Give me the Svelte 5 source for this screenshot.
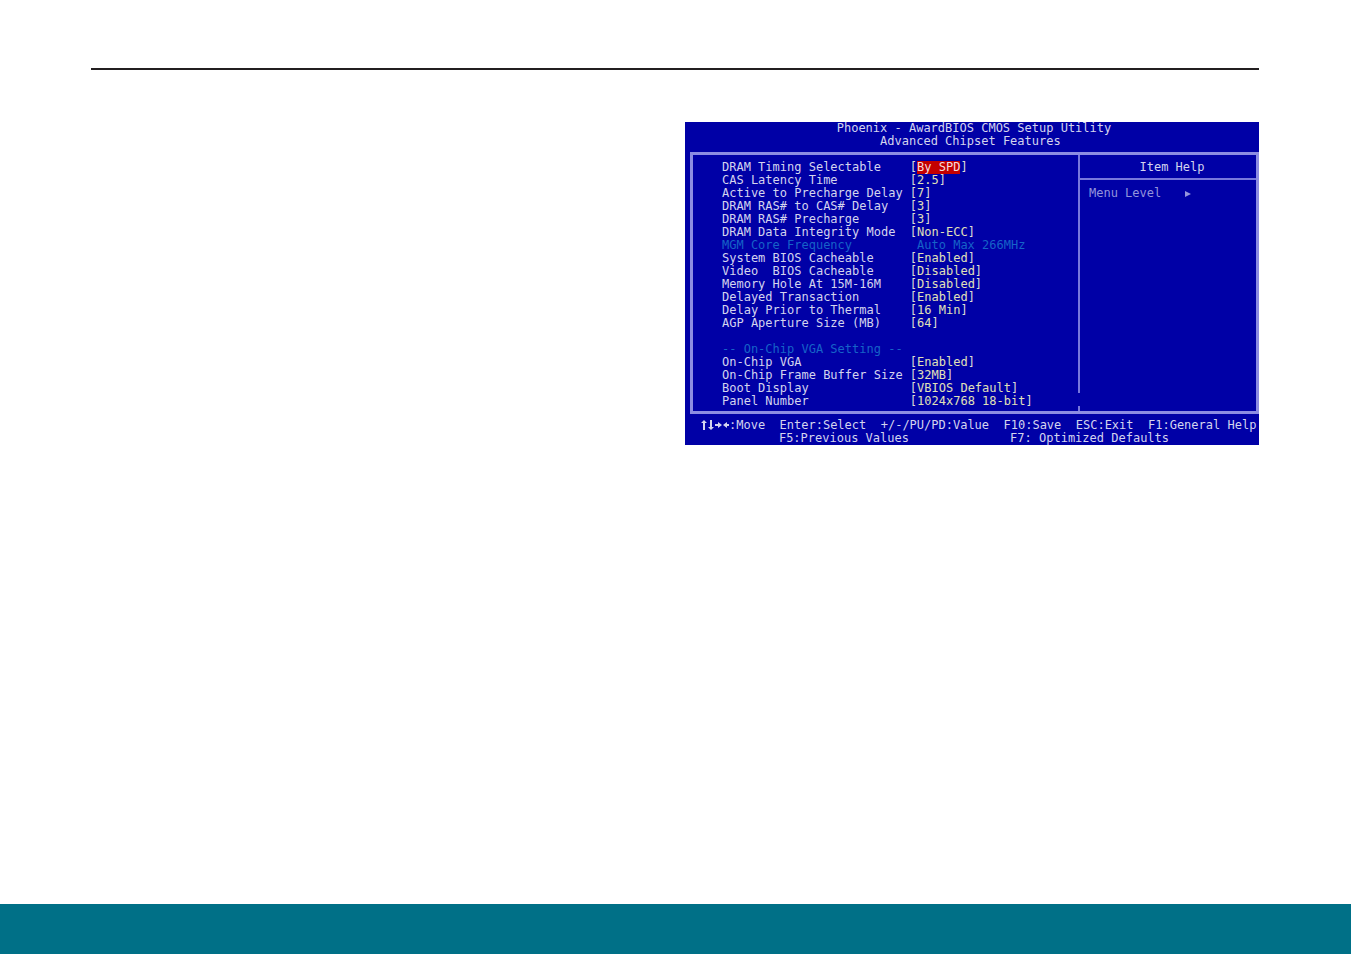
<script lang="ts">
	interface Setting {
		label: string;
		value?: string;
		selected?: boolean;
		heading?: boolean;
		fixed?: boolean;
	}

	const settings: Setting[] = [
		{ label: 'DRAM Timing Selectable', value: 'By SPD', selected: true },
		{ label: 'CAS Latency Time', value: '2.5' },
		{ label: 'Active to Precharge Delay', value: '7' },
		{ label: 'DRAM RAS# to CAS# Delay', value: '3' },
		{ label: 'DRAM RAS# Precharge', value: '3' },
		{ label: 'DRAM Data Integrity Mode', value: 'Non-ECC' },
		{ label: 'MGM Core Frequency', value: 'Auto Max 266MHz', fixed: true },
		{ label: 'System BIOS Cacheable', value: 'Enabled' },
		{ label: 'Video  BIOS Cacheable', value: 'Disabled' },
		{ label: 'Memory Hole At 15M-16M', value: 'Disabled' },
		{ label: 'Delayed Transaction', value: 'Enabled' },
		{ label: 'Delay Prior to Thermal', value: '16 Min' },
		{ label: 'AGP Aperture Size (MB)', value: '64' },
		{ label: '', heading: true },
		{ label: '-- On-Chip VGA Setting --', heading: true },
		{ label: 'On-Chip VGA', value: 'Enabled' },
		{ label: 'On-Chip Frame Buffer Size', value: '32MB' },
		{ label: 'Boot Display', value: 'VBIOS Default' },
		{ label: 'Panel Number', value: '1024x768 18-bit' }
	];
</script>

<div class="page">
	<hr />
	<main>
		<section class="bios">
			<header>
				<h1>Phoenix - AwardBIOS CMOS Setup Utility</h1>
				<h2>Advanced Chipset Features</h2>
			</header>
			<div class="frame">
				<table>
					<tbody>
						{#each settings as item}
							<tr class={{ dim: item.fixed || item.heading }}>
								{#if item.heading}
									<th colspan="2">{item.label}</th>
								{:else}
									<th scope="row">{item.label}</th>
									<td>
										{#if item.fixed}
											<span class="fixed">{item.value}</span>
										{:else}
											[<button type="button" class={{ selected: item.selected }}>{item.value}</button>]
										{/if}
									</td>
								{/if}
							</tr>
						{/each}
					</tbody>
				</table>
				<aside>
					<h3>Item Help</h3>
					<p>
						Menu Level
						<svg viewBox="0 0 7 6" width="7" height="6" aria-hidden="true"><path d="M0 0 6 3 0 6z" /></svg>
					</p>
				</aside>
			</div>
			<footer>
				<div class="keys">
					<span>
						<svg viewBox="0 0 28 10" width="28" height="10" aria-hidden="true">
							<path d="M3 0 6 3H4v7H2V3H0zM9 0h2v7h2l-3 3-3-3h2zM14 4h3V2l4 3-4 3V6h-3zM28 4h-2V2l-4 3 4 3V6h2z" />
						</svg>:Move
					</span>
					<span>Enter:Select</span>
					<span>+/-/PU/PD:Value</span>
					<span>F10:Save</span>
					<span>ESC:Exit</span>
					<span>F1:General Help</span>
				</div>
				<div class="keys second">
					<span>F5:Previous Values</span>
					<span>F7: Optimized Defaults</span>
				</div>
			</footer>
		</section>
	</main>
	<div class="band"></div>
</div>

<style>
	:global(body) {
		margin: 0;
		background: #fff;
	}

	.page {
		display: flex;
		flex-direction: column;
		min-height: 100vh;
	}

	hr {
		width: auto;
		height: 2px;
		margin: 68px 92px 0 91px;
		border: 0;
		background: #231f20;
	}

	main {
		flex: 1;
		display: grid;
		grid-template-columns: 1fr 1fr;
		align-items: start;
		gap: 20px;
		margin: 52px 92px 40px 91px;
	}

	.band {
		height: 50px;
		background: #007087;
	}

	.bios {
		grid-column: 2;
		background: #0000a6;
		color: #d4d4ee;
		font: 12px/13px 'DejaVu Sans Mono', 'Liberation Mono', monospace;
	}

	h1,
	h2,
	h3,
	p {
		margin: 0;
		font: inherit;
	}

	header {
		padding-bottom: 4px;
		white-space: nowrap;
	}

	h1 {
		padding-left: 21ch;
	}

	h2 {
		padding-left: 27ch;
	}

	.frame {
		display: flex;
		margin-left: 5px;
		border: 3px solid #8c8ce2;
	}

	table {
		flex: 1;
		margin: 6px 0 3px 29px;
		border-collapse: collapse;
		table-layout: fixed;
	}

	th,
	td {
		padding: 0;
		height: 13px;
		font-weight: inherit;
		text-align: left;
		white-space: pre;
	}

	th {
		width: 26ch;
	}

	td {
		white-space: nowrap;
		color: #dcdcd4;
	}

	button {
		padding: 0;
		border: 0;
		background: none;
		color: #e0e0b8;
		font: inherit;
		cursor: pointer;
	}

	.selected {
		background: #c40000;
		color: #f4dcdc;
	}

	.dim,
	.dim td {
		color: #1663c8;
	}

	.fixed {
		margin-left: 1ch;
	}

	/* the divider breaks off one row above the bottom edge */
	aside {
		width: 178px;
		background:
			linear-gradient(#7878dc, #7878dc) left top / 2px calc(100% - 18px) no-repeat,
			linear-gradient(#7878dc, #7878dc) left bottom / 2px 5px no-repeat;
	}

	h3 {
		padding: 6px 0 4px 10px;
		border-bottom: 2px solid #7878dc;
		text-align: center;
	}

	p {
		display: flex;
		align-items: center;
		gap: 24px;
		padding: 7px 0 0 11px;
		color: #9494dc;
		white-space: nowrap;
	}

	svg {
		fill: currentColor;
	}

	footer {
		padding-top: 5px;
	}

	.keys {
		display: flex;
		gap: 2ch;
		padding-left: 16px;
		white-space: nowrap;
	}

	.keys svg {
		height: 10px;
		vertical-align: -1px;
	}

	.second {
		gap: 14ch;
		padding-left: 13ch;
	}
</style>
